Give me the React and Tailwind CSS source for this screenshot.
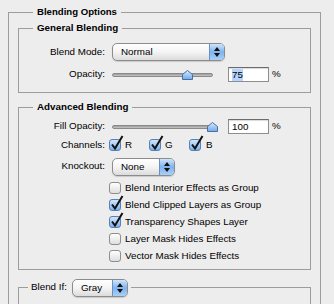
import { useState } from "react";

// little aqua popup button
function Select({ value, width }) {
  return (
    <div
      className={`flex h-[18px] ${width} items-stretch rounded-[5px] border border-[#8c8c8c] bg-gradient-to-b from-white via-[#f4f4f4] to-[#dcdcdc] shadow-[0_1px_1px_rgba(0,0,0,0.15)]`}
    >
      <span className="flex-1 pl-[8px] leading-[16px] text-black">{value}</span>
      <span className="flex w-[15px] flex-col items-center justify-center gap-[2px] rounded-r-[4px] border-l border-[#6b8fc0] bg-gradient-to-b from-[#cfe4fb] via-[#7fb3ef] to-[#a9cff7]">
        <svg width="6" height="4" viewBox="0 0 6 4">
          <path d="M0 4 L3 0 L6 4 Z" fill="#111" />
        </svg>
        <svg width="6" height="4" viewBox="0 0 6 4">
          <path d="M0 0 L3 4 L6 0 Z" fill="#111" />
        </svg>
      </span>
    </div>
  );
}

function Slider({ pos }) {
  return (
    <div className="relative h-[14px] w-[101px]">
      <div className="absolute left-0 right-0 top-[5px] h-[4px] rounded-full border border-[#8a8a8a] bg-gradient-to-b from-[#9a9a9a] to-[#c8c8c8]" />
      <svg
        className="absolute top-[2px]"
        style={{ left: pos - 5 }}
        width="11"
        height="10"
        viewBox="0 0 11 10"
      >
        <defs>
          <linearGradient id="thumb" x1="0" y1="0" x2="0" y2="1">
            <stop offset="0" stopColor="#d8ebfd" />
            <stop offset="1" stopColor="#6ea9ec" />
          </linearGradient>
        </defs>
        <path d="M0.5 4.5 L5.5 0.5 L10.5 4.5 L10.5 9.5 L0.5 9.5 Z" fill="url(#thumb)" stroke="#4a6f9e" />
      </svg>
    </div>
  );
}

function NumberBox({ value, selected }) {
  return (
    <div className="flex items-center gap-[3px]">
      <div className="flex h-[15px] w-[41px] items-center border border-[#8e8e8e] border-t-[#6c6c6c] bg-white pl-[3px] shadow-[inset_0_1px_1px_rgba(0,0,0,0.15)]">
        <span className={`leading-[12px] ${selected ? "bg-[#b5d5ff]" : ""}`}>{value}</span>
      </div>
      <span>%</span>
    </div>
  );
}

function Check({ checked }) {
  return (
    <span
      className={`relative inline-block h-[12px] w-[12px] shrink-0 rounded-[3px] border ${
        checked
          ? "border-[#5a7fb0] bg-gradient-to-b from-[#d3e6fb] to-[#78afee]"
          : "border-[#8e8e8e] bg-gradient-to-b from-white to-[#dedede]"
      }`}
    >
      {checked && (
        <svg className="absolute left-[0px] top-[-5px]" width="14" height="16" viewBox="0 0 14 16">
          <path d="M2 9.5 L5 13.5 L12.5 1" fill="none" stroke="#111" strokeWidth="2" />
        </svg>
      )}
    </span>
  );
}

function Row({ label, children, className = "" }) {
  return (
    <div className={`flex items-center ${className}`}>
      <span className="w-[86px] shrink-0 text-right">{label}</span>
      {children}
    </div>
  );
}

export default function App() {
  const [options] = useState([
    { label: "Blend Interior Effects as Group", checked: false },
    { label: "Blend Clipped Layers as Group", checked: true },
    { label: "Transparency Shapes Layer", checked: true },
    { label: "Layer Mask Hides Effects", checked: false },
    { label: "Vector Mask Hides Effects", checked: false },
  ]);

  return (
    <main className="min-h-screen bg-[#ededed] pl-[8px] pt-[6px] font-['Liberation_Sans',Arial,sans-serif] text-[9.8px] text-black">
      <fieldset className="w-[313px] border border-[#9d9d9d] px-[9px] pb-[20px] pt-[4px]">
        <legend className="ml-[15px] px-[4px] text-[9.6px] font-bold leading-[12px]">Blending Options</legend>

        {/* General Blending */}
        <fieldset className="border border-[#9d9d9d] pb-[10px] pt-[9px]">
          <legend className="ml-[14px] px-[4px] font-bold leading-[12px]">General Blending</legend>
          <Row label="Blend Mode:" className="gap-[7px]">
            <Select value="Normal" width="w-[113px]" />
          </Row>
          <Row label="Opacity:" className="mt-[6px] gap-[7px]">
            <Slider pos={75} />
            <div className="ml-[8px]">
              <NumberBox value="75" selected />
            </div>
          </Row>
        </fieldset>

        {/* Advanced Blending */}
        <fieldset className="mt-[8px] border border-[#9d9d9d] pb-[4px] pt-[6px]">
          <legend className="ml-[14px] px-[4px] font-bold leading-[12px]">Advanced Blending</legend>
          <Row label="Fill Opacity:" className="gap-[7px]">
            <Slider pos={100} />
            <div className="ml-[8px]">
              <NumberBox value="100" />
            </div>
          </Row>
          <Row label="Channels:" className="mt-[4px] gap-[4px]">
            <div className="flex items-center">
              <label className="flex w-[40px] items-center gap-[4px]">
                <Check checked />R
              </label>
              <label className="flex w-[40px] items-center gap-[4px]">
                <Check checked />G
              </label>
              <label className="flex items-center gap-[5px]">
                <Check checked />B
              </label>
            </div>
          </Row>
          <Row label="Knockout:" className="mt-[5px] gap-[7px]">
            <Select value="None" width="w-[63px]" />
          </Row>
          <div className="mt-[4px] pl-[90px]">
            {options.map((o) => (
              <label key={o.label} className="flex h-[17px] items-center gap-[4px]">
                <Check checked={o.checked} />
                {o.label}
              </label>
            ))}
          </div>
        </fieldset>

        {/* Blend If */}
        <fieldset className="mt-[9px] h-[60px] border border-[#9d9d9d]">
          <legend className="ml-[9px] flex items-center gap-[5px] px-[3px]">
            <span>Blend If:</span>
            <Select value="Gray" width="w-[56px]" />
          </legend>
        </fieldset>
      </fieldset>
    </main>
  );
}
